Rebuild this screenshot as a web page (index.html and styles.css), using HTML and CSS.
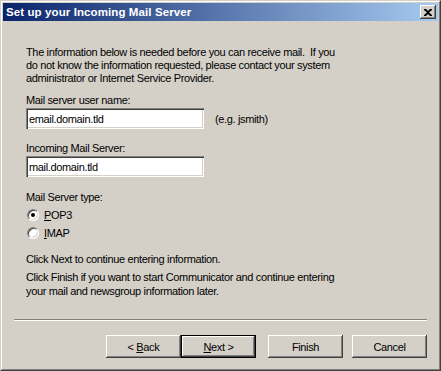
FILE: index.html
```html
<!DOCTYPE html>
<html lang="en">

<head>
  <meta charset="UTF-8" />
  <title>Set up your Incoming Mail Server</title>
  <link rel="stylesheet" href="styles.css">
</head>

<body>
  <div class="window">
    <div class="frame">
      <div class="titlebar">
        <span class="title">Set up your Incoming Mail Server</span>
        <button class="close-btn" aria-label="Close">
          <svg width="8" height="7" viewBox="0 0 8 7">
            <path d="M0 0h2l2 2 2-2h2v1L5 3.5 8 6v1H6L4 5 2 7H0V6l3-2.5L0 1z" fill="#000" />
          </svg>
        </button>
      </div>

      <div class="content">
        <p class="intro">The information below is needed before you can receive mail.&nbsp; If you<br>
          do not know the information requested, please contact your system<br>
          administrator or Internet Service Provider.</p>

        <label class="field-label" for="user">Mail server user name:</label>
        <div class="field-row">
          <input class="text-input" type="text" id="user" value="email.domain.tld" />
          <span class="hint">(e.g. jsmith)</span>
        </div>

        <label class="field-label second" for="server">Incoming Mail Server:</label>
        <div class="field-row">
          <input class="text-input" type="text" id="server" value="mail.domain.tld" />
        </div>

        <div class="type-label">Mail Server type:</div>
        <label class="radio-row">
          <span class="radio checked"></span>
          <span><u>P</u>OP3</span>
        </label>
        <label class="radio-row">
          <span class="radio"></span>
          <span><u>I</u>MAP</span>
        </label>

        <p class="note first">Click Next to continue entering information.</p>
        <p class="note">Click Finish if you want to start Communicator and continue entering<br>
          your mail and newsgroup information later.</p>
      </div>

      <div class="footer">
        <hr class="separator">
        <div class="buttons">
          <div class="pair">
            <button class="btn">&lt; <u>B</u>ack</button>
            <button class="btn default"><u>N</u>ext &gt;</button>
          </div>
          <button class="btn finish">Finish</button>
          <button class="btn cancel">Cancel</button>
        </div>
      </div>
    </div>
  </div>
</body>

</html>
```

FILE: styles.css
```css
html,
body {
  margin: 0;
  padding: 0;
  background-color: #d4d0c8;
}

body {
  font-family: 'Liberation Sans', Arial, sans-serif;
  font-size: 11px;
  letter-spacing: -0.35px;
  color: #000;
}

.window {
  width: 441px;
  height: 371px;
  box-sizing: border-box;
  border: 1px solid;
  border-color: #d4d0c8 #404040 #404040 #d4d0c8;
}

.frame {
  height: 100%;
  box-sizing: border-box;
  border: 1px solid;
  border-color: #fff #808080 #808080 #fff;
  padding: 1px;
  display: flex;
  flex-direction: column;
}

.titlebar {
  height: 18px;
  display: flex;
  align-items: center;
  justify-content: space-between;
  padding: 0 2px 0 3px;
  background: linear-gradient(to right, #0a246a, #a6caf0);
}

.title {
  color: #fff;
  font-weight: bold;
  font-size: 11.5px;
  letter-spacing: 0.1px;
}

.close-btn {
  width: 16px;
  height: 14px;
  padding: 0;
  display: flex;
  align-items: center;
  justify-content: center;
  background-color: #d4d0c8;
  border: none;
  box-shadow: inset -1px -1px #404040, inset 1px 1px #fff, inset -2px -2px #808080;
}

.content {
  padding: 25px 20px 0 23px;
  flex: 1;
}

.intro {
  margin: 0;
  line-height: 13px;
  white-space: nowrap;
}

.field-label {
  display: block;
  margin-top: 9px;
  line-height: 13px;
}

.field-label.second {
  margin-top: 13px;
}

.field-row {
  display: flex;
  align-items: center;
  margin-top: 1px;
}

.text-input {
  width: 178px;
  height: 21px;
  box-sizing: border-box;
  margin: 0;
  padding: 0 3px;
  font-family: inherit;
  font-size: 11px;
  letter-spacing: -0.35px;
  color: #000;
  background-color: #fff;
  border: none;
  box-shadow: inset 1px 1px #808080, inset 2px 2px #404040, inset -1px -1px #fff, inset -2px -2px #d4d0c8;
  outline: none;
}

.hint {
  margin-left: 11px;
}

.type-label {
  margin-top: 14px;
  line-height: 13px;
}

.radio-row {
  display: flex;
  align-items: center;
  gap: 5px;
  height: 18px;
  padding-left: 1px;
  margin-top: 2px;
}

.radio-row + .radio-row {
  margin-top: 0;
}

.radio {
  width: 12px;
  height: 12px;
  box-sizing: border-box;
  border-radius: 50%;
  background-color: #fff;
  border: 1px solid;
  border-color: #808080 #fff #fff #808080;
  box-shadow: inset 1px 1px #404040, inset -1px -1px #d4d0c8;
  position: relative;
}

.radio.checked::after {
  content: "";
  position: absolute;
  left: 3px;
  top: 3px;
  width: 4px;
  height: 4px;
  border-radius: 50%;
  background-color: #000;
}

.note {
  margin: 0;
  line-height: 14px;
  white-space: nowrap;
}

.note.first {
  margin-top: 10px;
  margin-bottom: 4px;
}

.footer {
  padding: 0 11px 10px 11px;
}

.separator {
  margin: 0 0 14px;
  border: none;
  border-top: 1px solid #808080;
  border-bottom: 1px solid #fff;
}

.buttons {
  display: flex;
  justify-content: flex-end;
  align-items: center;
}

.pair {
  display: flex;
}

.btn {
  width: 75px;
  height: 23px;
  padding: 0;
  font-family: inherit;
  font-size: 11px;
  letter-spacing: -0.35px;
  color: #000;
  background-color: #d4d0c8;
  border: none;
  box-shadow: inset -1px -1px #404040, inset 1px 1px #fff, inset -2px -2px #808080;
}

.btn.default {
  box-shadow: inset 0 0 0 1px #000, inset -2px -2px #404040, inset 2px 2px #fff, inset -3px -3px #808080;
}

.finish {
  margin-left: 12px;
}

.cancel {
  margin-left: 9px;
}
```
